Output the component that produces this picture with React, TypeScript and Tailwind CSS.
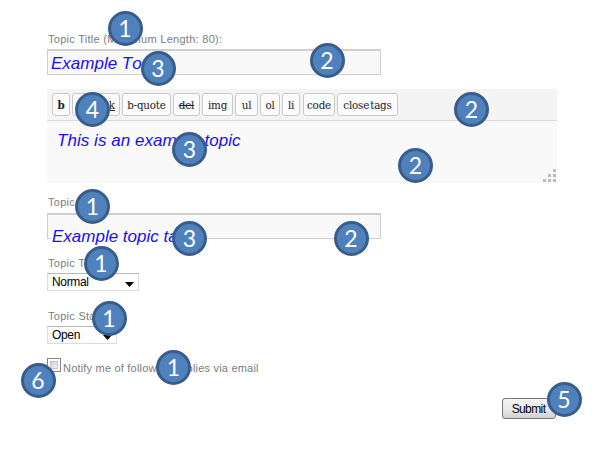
import type { ReactNode } from "react";

const badges = [
  { n: 1, x: 125, y: 28 }, { n: 3, x: 158, y: 68 }, { n: 2, x: 327, y: 60.5 },
  { n: 4, x: 92.5, y: 109.5 }, { n: 2, x: 471.5, y: 109.5 }, { n: 3, x: 189.5, y: 149.5 },
  { n: 2, x: 415.5, y: 165.5 }, { n: 1, x: 92.5, y: 206 }, { n: 3, x: 189.5, y: 238.5 },
  { n: 2, x: 351, y: 238.5 }, { n: 1, x: 101, y: 263 }, { n: 1, x: 109, y: 318.5 },
  { n: 1, x: 173.5, y: 367.5 }, { n: 6, x: 38, y: 380 }, { n: 5, x: 564, y: 399.5 },
];

const tools = [
  { label: "b", cls: "w-[18px] mr-[2px] font-bold" },
  { label: "link", cls: "w-[48px] mr-[2px] underline pl-[19px]" },
  { label: "b-quote", cls: "w-[49px] mr-[2px]" },
  { label: "del", cls: "w-[27px] mr-[2px] line-through" },
  { label: "img", cls: "w-[31px] mr-[2px]" },
  { label: "ul", cls: "w-[23px] mr-[2px]" },
  { label: "ol", cls: "w-[20px] mr-[2px]" },
  { label: "li", cls: "w-[18px] mr-[3px]" },
  { label: "code", cls: "w-[32px] mr-[2px]" },
  { label: "close tags", cls: "w-[61px] [word-spacing:-2px]" },
];

function Label({ children }: { children: ReactNode }) {
  return <div className="h-[14px] whitespace-nowrap pl-px text-[11px] leading-[14px] tracking-[0.28px] text-[#7c7c7c]">{children}</div>;
}

function Select({ value, className }: { value: string; className: string }) {
  return (
    <div className={`flex h-[18px] items-center justify-between border border-[#dcdcdc] border-t-[#b8b8b8] bg-white pl-1 pr-1 text-[12px] leading-[16px] tracking-[-0.35px] text-black ${className}`}>
      <span>{value}</span>
      <svg width="9" height="5" viewBox="0 0 9 5" className="mt-[5px]"><path d="M0 0h9L4.5 5z" fill="#000" /></svg>
    </div>
  );
}

export default function App() {
  return (
    <div className="relative h-[469px] w-[608px] overflow-hidden bg-white pl-[47px] pt-[32px] font-['Liberation_Sans',Arial,sans-serif]">
      <Label>Topic Title (Maximum Length: 80):</Label>
      <div className="mt-[3px] h-[26px] w-[334px] border border-t-2 border-[#cfcfcf] bg-[#f9f9f9] pl-[3px] text-[17px] italic leading-[26px] text-[#1a0ef0] [font-kerning:none]">Example Topic</div>

      <div className="mt-[14px] w-[510px]">
        <div className="flex h-[32px] border-b border-[#dadada] bg-[#f4f4f4] pl-[5px] pt-[4px]">
          {tools.map((t) => (
            <div key={t.label} className={`flex h-[23px] shrink-0 items-center justify-center whitespace-nowrap rounded-[3px] border border-[#c9c9c9] bg-[#fbfbfb] font-['DejaVu_Serif_Condensed','DejaVu_Serif',serif] text-[11.5px] leading-[14px] tracking-[-0.2px] text-[#222] ${t.cls}`}>{t.label}</div>
          ))}
        </div>
        <div className="flex h-[62px] justify-between bg-[#f9f9f9] pl-[10px] pt-[8px]">
          <span className="text-[17px] italic leading-[24px] tracking-[0.05px] text-[#1a0ef0] [font-kerning:none]">This is an example topic</span>
          <svg width="14" height="14" viewBox="0 0 14 14" className="mt-[40px]">
            <path d="M10 0h3v3h-3zM5 5h3v3H5zM10 5h3v3h-3zM0 10h3v3H0zM5 10h3v3H5zM10 10h3v3h-3z" fill="#bdbdbd" />
          </svg>
        </div>
      </div>

      <div className="mt-[12px]"><Label>Topic Tags:</Label></div>
      <div className="mt-[4px] h-[26px] w-[334px] border border-t-2 border-[#cfcfcf] bg-[#f9f9f9] pl-[3px] pt-[9px]">
        <div className="h-[15px] w-[135px] whitespace-nowrap bg-[#f9f9f9] pl-px text-[17px] italic leading-[25px] text-[#1a0ef0]">Example topic tag</div>
      </div>

      <div className="mt-[17px]"><Label>Topic Type:</Label></div>
      <Select value="Normal" className="mt-[3px] w-[92px]" />
      <div className="mt-[18px]"><Label>Topic Status:</Label></div>
      <Select value="Open" className="mt-[3px] w-[70px]" />

      <div className="mt-[14px] flex h-[18px]">
        <div className="h-[14px] w-[14px] border border-[#858585] bg-white p-[2px]">
          <div className="h-full w-full border border-[#c4c4c4] bg-gradient-to-br from-[#ccd1d7] to-[#f3f3f3]" />
        </div>
        <div className="ml-[2px] mt-[3px] whitespace-nowrap text-[11px] leading-[14px] tracking-[0.2px] text-[#7c7c7c]">Notify me of follow-up replies via email</div>
      </div>
      <div className="ml-[455px] mt-[22px] flex h-[21px] w-[54px] items-center justify-center rounded-[3px] border border-[#777] bg-gradient-to-b from-[#f3f3f3] via-[#ebebeb] to-[#d0d0d0] pr-px text-[12px] tracking-[-0.6px] text-black">Submit</div>

      {badges.map((b, i) => (
        <div key={i} className="absolute flex h-[35px] w-[35px] items-center justify-center rounded-full border-[3px] border-[#385d8a] bg-[#4f81bd] font-['Lato','Open_Sans',sans-serif] text-[23px] leading-none text-white" style={{ left: b.x - 17.5, top: b.y - 17.5 }}>{b.n}</div>
      ))}
    </div>
  );
}
